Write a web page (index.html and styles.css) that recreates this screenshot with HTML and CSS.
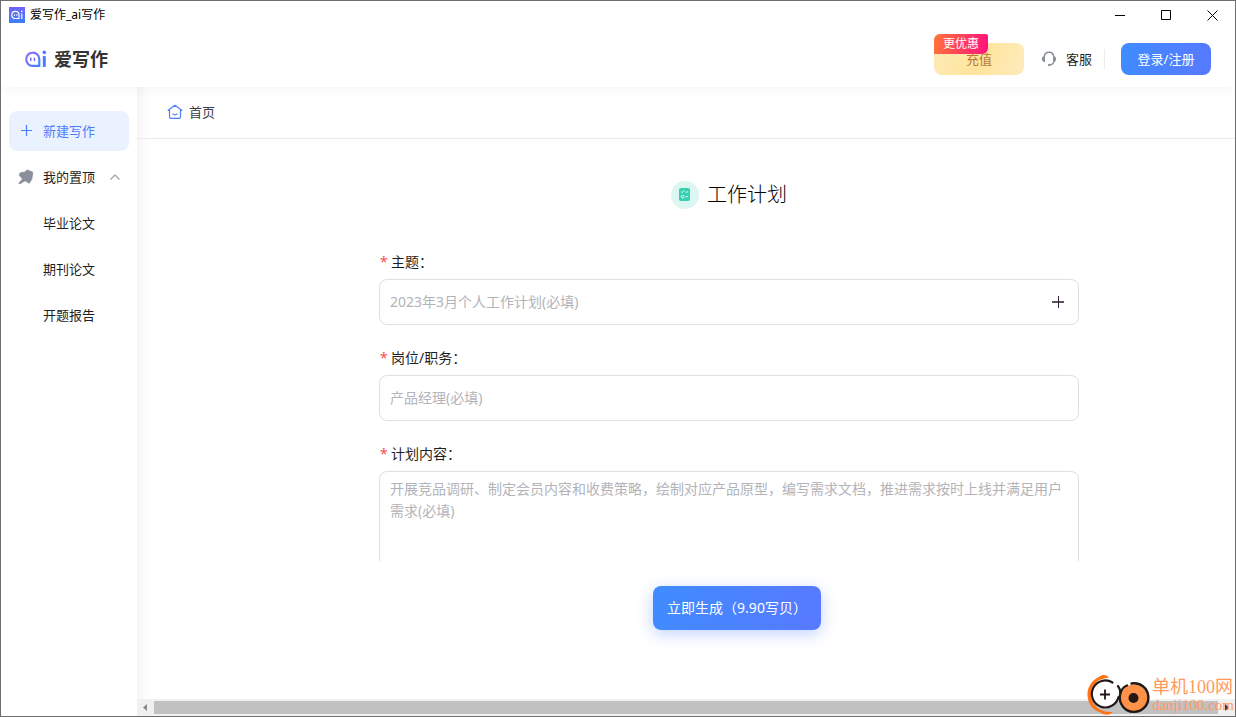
FILE: index.html
```html
<!DOCTYPE html>
<html lang="zh-CN">
<head>
<meta charset="utf-8">
<title>爱写作_ai写作</title>
<link rel="stylesheet" href="styles.css">
</head>
<body>
<svg class="defs" aria-hidden="true">
  <defs>
    <linearGradient id="brand" x1="0" y1="0" x2="1" y2="1">
      <stop offset="0" stop-color="#9c6bff"/>
      <stop offset="1" stop-color="#3f83ff"/>
    </linearGradient>
    <linearGradient id="brandBox" x1="0" y1="0" x2="0" y2="1">
      <stop offset="0" stop-color="#6f63f5"/>
      <stop offset="1" stop-color="#3f7ffb"/>
    </linearGradient>
  </defs>
</svg>
<div class="window">
  <div class="titlebar">
    <svg class="app-icon" width="16" height="16" viewBox="0 0 16 16">
      <rect width="16" height="16" fill="url(#brandBox)"/>
      <path d="M10 11.5H6.2A3.6 3.6 0 1 1 10 8z" fill="none" stroke="#fff" stroke-width="1.2"/>
      <path d="M5.5 7.3v1.4M7.8 7.3v1.4M12.8 6.5v5.4" stroke="#fff" stroke-width="1.1"/>
      <circle cx="12.8" cy="4.4" r=".8" fill="#fff"/>
    </svg>
    <span class="app-title">爱写作_ai写作</span>
    <div class="controls">
      <button class="control" aria-label="最小化"><svg width="11" height="11"><path d="M0 5.5h10" stroke="#000"/></svg></button>
      <button class="control" aria-label="最大化"><svg width="11" height="11"><path d="M.5.5h9v9h-9z" fill="none" stroke="#000"/></svg></button>
      <button class="control" aria-label="关闭"><svg width="11" height="11"><path d="M.5.5l10 10M10.5.5l-10 10" stroke="#000" stroke-width="1"/></svg></button>
    </div>
  </div>

  <header class="header">
    <div class="logo">
      <svg width="24" height="18" viewBox="0 0 24 18">
        <path d="M15.300 15.900H8.500A6.300 6.600 0 0 1 8.500 2.700A6.500 6.600 0 0 1 15.300 9.400z" fill="none" stroke="url(#brand)" stroke-width="2.200" stroke-linejoin="round"/>
        <path d="M6.800 8.200v2.200M10.400 8.200v2.200" stroke="#6f6cff" stroke-width="1.500" stroke-linecap="round"/>
        <rect x="18.800" y="6" width="3" height="11" rx=".8" fill="#4d7dff"/>
        <circle cx="20.300" cy="2.400" r="1.800" fill="#5f75ff"/>
      </svg>
      <span class="logo-text">爱写作</span>
    </div>
    <button class="recharge">充值<span class="badge">更优惠</span></button>
    <button class="service">
      <svg width="16" height="16" viewBox="0 0 16 16">
        <path d="M3.200 6.500C3.200 3.300 5.200 1.300 8 1.300s4.800 2 4.800 5.200v3.200c0 2.600-1.500 4-4.300 4.300" fill="none" stroke="#8b8f9b" stroke-width="1.400"/>
        <path d="M4 5v6C2.200 11 .8 9.700.8 8S2.200 5 4 5zM12 5v6c1.800 0 3.200-1.300 3.200-3S13.800 5 12 5z" fill="#8b8f9b"/>
        <circle cx="8.200" cy="14" r="1.200" fill="#8b8f9b"/>
      </svg>
      客服
    </button>
    <span class="divider"></span>
    <button class="login">登录/注册</button>
  </header>

  <div class="body">
    <nav class="sidebar">
      <a class="nav-item active" href="#">
        <svg width="16" height="16"><path d="M3 7.500h11M8.500 2v11" stroke="#4d7dff" stroke-width="1.200"/></svg>
        <span>新建写作</span>
      </a>
      <a class="nav-item" href="#">
        <svg width="16" height="16" viewBox="0 0 16 16"><path d="M9.400.9L14.800 3.200 14.200 7.500 13.800 10.200 11.200 14.300 7 11.700 1.700 15 .9 14.200 4.500 9.900 1.200 6.300 2.400 3.700 6.500 3.200z" fill="#8b8f9b" stroke="#8b8f9b" stroke-width=".8" stroke-linejoin="round"/></svg>
        <span>我的置顶</span>
        <svg class="arrow" width="12" height="12"><path d="M1.500 8.500L6 4l4.500 4.500" fill="none" stroke="#9a9a9f" stroke-width="1.100"/></svg>
      </a>
      <a class="nav-item sub" href="#">毕业论文</a>
      <a class="nav-item sub" href="#">期刊论文</a>
      <a class="nav-item sub" href="#">开题报告</a>
    </nav>

    <main class="main">
      <div class="breadcrumb">
        <svg width="16" height="16" viewBox="0 0 16 16">
          <path d="M8 1.300L1.200 6.300h1.300v6.400c0 1.100.6 1.700 1.700 1.700h7.600c1.100 0 1.700-.6 1.700-1.700V6.300h1.300z" fill="none" stroke="#4d7dff" stroke-width="1.200" stroke-linejoin="round"/>
          <path d="M5.600 9.400c1 2 3.800 2 4.800 0" fill="none" stroke="#4d7dff" stroke-width="1.200"/>
        </svg>
        <a href="#">首页</a>
      </div>
      <div class="viewport">
        <div class="canvas">
          <div class="form-scroll">
            <form class="form" id="plan">
              <h1 class="form-title">
                <svg width="28" height="28" viewBox="0 0 28 28">
                  <circle cx="14" cy="14" r="14" fill="#dcf7f1"/>
                  <rect x="8" y="7" width="11" height="13" rx="2" fill="#36cfb0"/>
                  <path d="M10 10.500l1.300 1.300 2-2.600M14.500 11h2.800M14.500 15.700h2.800" fill="none" stroke="#dcfff6" stroke-width="1"/>
                  <circle cx="11.700" cy="15.700" r="1.400" fill="none" stroke="#dcfff6"/>
                </svg>
                工作计划
              </h1>
              <div class="field">
                <label for="topic"><span class="required">*</span>主题：</label>
                <div class="input-box">
                  <input id="topic" type="text" placeholder="2023年3月个人工作计划(必填)">
                  <button class="add" type="button" aria-label="添加"><svg width="14" height="14"><path d="M1 7h12" stroke="#555" stroke-width="2"/><path d="M7.500 1v12" stroke="#33203f"/></svg></button>
                </div>
              </div>
              <div class="field">
                <label for="post"><span class="required">*</span>岗位/职务：</label>
                <div class="input-box"><input id="post" type="text" placeholder="产品经理(必填)"></div>
              </div>
              <div class="field">
                <label for="content"><span class="required">*</span>计划内容：</label>
                <textarea id="content" rows="6" placeholder="开展竞品调研、制定会员内容和收费策略，绘制对应产品原型，编写需求文档，推进需求按时上线并满足用户需求(必填)"></textarea>
              </div>
            </form>
          </div>
          <div class="actions"><button class="submit" form="plan" type="button">立即生成（9.90写贝）</button></div>
        </div>
      </div>
      <div class="scrollbar">
        <svg width="17" height="17"><path d="M10 5v7L6 8.500z" fill="#8a8a8a"/></svg>
        <span class="thumb"></span>
        <svg width="17" height="17"><path d="M7 5v7l4-3.500z" fill="#333"/></svg>
      </div>
    </main>
  </div>

  <div class="watermark">
    <svg width="64" height="42" viewBox="0 0 64 42">
      <circle cx="18.500" cy="20.500" r="14" fill="#fff"/>
      <path d="M22 3.500C20 .5 15 0 12.500 2.500 5 6 0 13 .5 21.500 1 30 6 36.500 13.500 38.500c4 3 9 3 12.500-.5-12 1-21.500-6-22-17C3.500 12 10 4.500 22 3.500z" fill="#ff7416"/>
      <path d="M25.500 8.500A13.500 13.500 0 1 0 31.500 23M31 12c2 2.500 2.500 5 2.500 8" fill="none" stroke="#231815" stroke-width="2.200" stroke-linecap="round"/>
      <path d="M13 20.500h10M18 15.500v10" stroke="#231815" stroke-width="1.800"/>
      <circle cx="47" cy="24" r="13.500" fill="#ff9148"/>
      <path d="M44.500 9.500A14.300 14.300 0 1 1 33 21C34 16 36 13 40 11.500" fill="none" stroke="#231815" stroke-width="2.400" stroke-linecap="round"/>
      <circle cx="46.500" cy="24" r="5" fill="#231815"/>
    </svg>
    <div class="watermark-text"><span class="watermark-name">单机100网</span><span class="watermark-url">danji100.com</span></div>
  </div>
</div>
</body>
</html>
```

FILE: styles.css
```css
* { box-sizing: border-box; }

html, body { height: 100%; }

body {
  margin: 0;
  font-family: "Noto Sans", "Noto Sans CJK SC", sans-serif;
  font-size: 13px;
  line-height: 22px;
  color: #1f1f1f;
  background: #fff;
}

button, input, textarea { font: inherit; color: inherit; }

button {
  padding: 0;
  border: 0;
  background: none;
  cursor: pointer;
}

a { color: inherit; text-decoration: none; }

svg { flex: none; display: block; }

.defs { position: absolute; width: 0; height: 0; }

.window {
  position: relative;
  display: flex;
  flex-direction: column;
  height: 100%;
  border: 1px solid #6e6e6e;
  overflow: hidden;
}

.titlebar {
  display: flex;
  align-items: center;
  flex: none;
  height: 30px;
  padding: 0 0 2px 8px;
}

.app-title {
  margin-left: 5px;
  font-size: 12px;
  color: #000;
}

.controls { display: flex; margin-left: auto; }

.control {
  display: flex;
  align-items: center;
  justify-content: center;
  width: 46px;
  height: 28px;
}

.header {
  position: relative;
  z-index: 1;
  display: flex;
  align-items: center;
  flex: none;
  height: 56px;
  padding: 0 24px 0 23px;
  background: #fff;
  box-shadow: 0 0 16px rgba(0, 0, 0, 0.06);
  clip-path: inset(0 0 -20px 0);
}

.logo {
  display: flex;
  align-items: center;
  gap: 6px;
  margin-right: auto;
}

.logo-text {
  font-size: 18px;
  font-weight: 700;
  color: #333;
}

.recharge {
  position: relative;
  width: 90px;
  height: 32px;
  border-radius: 8px;
  background: linear-gradient(110deg, #fcebb8, #ffe49c 50%, #fcebbd);
  color: #b57a35;
}

.badge {
  position: absolute;
  top: -9px;
  left: 0;
  width: 54px;
  border-radius: 6px 2px 6px 0;
  background: linear-gradient(100deg, #ff7438, #ff0f7f);
  color: #fff;
  font-size: 12px;
  line-height: 20px;
}

.service {
  display: flex;
  align-items: center;
  gap: 9px;
  margin-left: 17px;
}

.divider {
  width: 1px;
  height: 20px;
  margin: 0 16px 0 12px;
  background: #ebebeb;
}

.login {
  width: 90px;
  height: 32px;
  border-radius: 8px;
  background: linear-gradient(100deg, #3f8cff, #5879ff);
  color: #fff;
}

.body { display: flex; flex: 1; min-height: 0; }

.sidebar {
  display: flex;
  flex-direction: column;
  flex: none;
  gap: 6px;
  width: 136px;
  padding: 24px 8px;
}

.nav-item {
  display: flex;
  align-items: center;
  gap: 9px;
  height: 40px;
  padding: 0 8px 0 9px;
  border-radius: 8px;
}

.nav-item.active { background: #ebf2ff; color: #4d7dff; }

.nav-item.sub { padding-left: 34px; }

.arrow { margin-left: auto; }

.main {
  display: flex;
  flex-direction: column;
  flex: 1;
  min-width: 0;
  box-shadow: inset 16px 0 12px -12px rgba(0, 0, 0, 0.05);
}

.breadcrumb {
  display: flex;
  align-items: center;
  flex: none;
  gap: 6px;
  height: 52px;
  padding: 0 0 2px 30px;
  border-bottom: 1px solid #ebebeb;
  color: #3b3d49;
}

.viewport { flex: 1; min-height: 0; overflow: hidden; }

.canvas {
  display: flex;
  flex-direction: column;
  min-width: 1200px;
  height: 100%;
}

.form-scroll {
  flex: 1;
  min-height: 0;
  padding-right: 16px;
  overflow: hidden;
}

.form {
  display: flex;
  flex-direction: column;
  gap: 22px;
  max-width: 700px;
  margin: 0 auto;
  padding-top: 42px;
}

.form-title {
  display: flex;
  align-items: center;
  justify-content: center;
  gap: 8px;
  height: 28px;
  margin: 0 0 20px;
  font-size: 20px;
  font-weight: 300;
  color: #000;
}

.field { display: flex; flex-direction: column; gap: 6px; font-size: 14px; }

.required {
  display: inline-block;
  width: 12px;
  padding-left: 1px;
  color: #ff4d4f;
}

.input-box {
  display: flex;
  align-items: center;
  height: 46px;
  padding: 0 13px 0 10px;
  border: 1px solid #dfdfe6;
  border-radius: 8px;
}

.input-box input {
  flex: 1;
  min-width: 0;
  padding: 0;
  border: 0;
  outline: 0;
  background: none;
}

textarea {
  display: block;
  width: 100%;
  padding: 6px 10px;
  border: 1px solid #dfdfe6;
  border-radius: 8px;
  outline: 0;
  resize: none;
  background: none;
}

::placeholder { color: #b2b4ba; opacity: 1; }

.actions {
  display: flex;
  justify-content: center;
  flex: none;
  padding: 25px 0 69px;
}

.submit {
  height: 44px;
  padding: 0 14px;
  border-radius: 8px;
  background: linear-gradient(100deg, #3f8cff, #5879ff);
  box-shadow: 0 4px 16px rgba(77, 125, 255, 0.35);
  color: #fff;
  font-size: 14px;
}

.scrollbar {
  display: flex;
  align-items: center;
  flex: none;
  height: 17px;
  background: #f0f0f0;
}

.thumb { flex: 1; height: 13px; background: #c1c1c1; }

.watermark {
  position: absolute;
  right: 1px;
  bottom: 0;
  z-index: 2;
  display: flex;
  align-items: center;
  gap: 1px;
}

.watermark-text {
  display: flex;
  flex-direction: column;
  font-family: "Liberation Serif", "Noto Sans CJK SC", serif;
  color: #ff9a5c;
}

.watermark-name { font-size: 18px; line-height: 20px; }

.watermark-url { font-size: 15px; line-height: 16px; }
```
